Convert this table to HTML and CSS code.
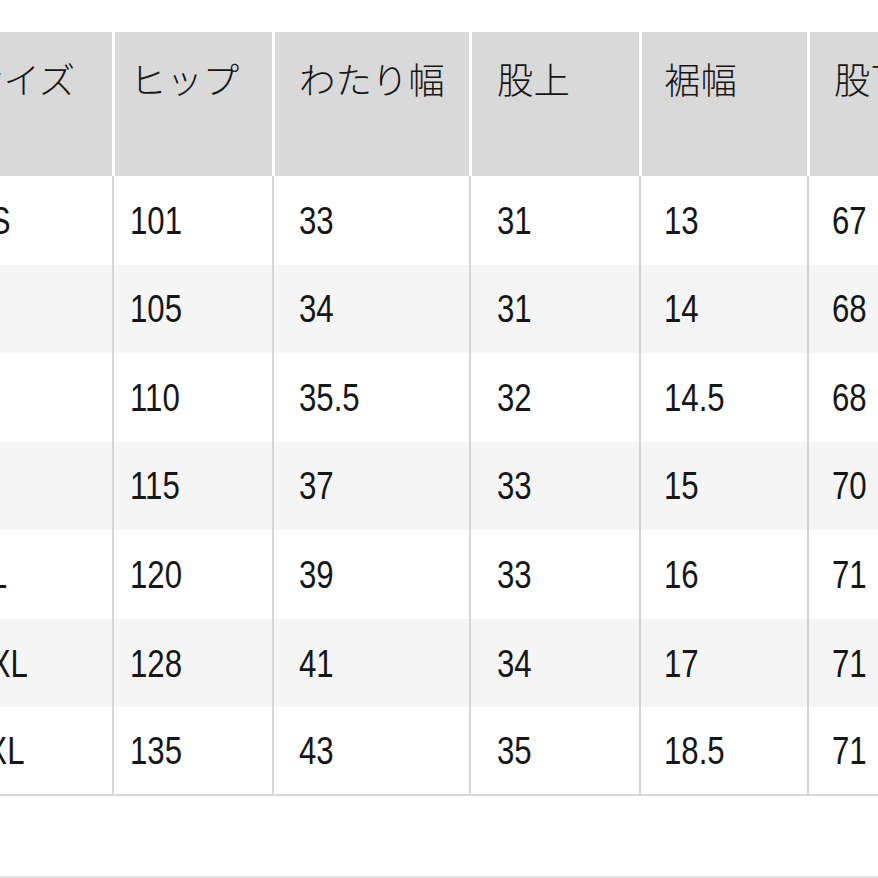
FILE: index.html
```html
<!DOCTYPE html>
<html lang="ja">
<head>
<meta charset="utf-8">
<title>サイズ表</title>
<link rel="stylesheet" href="styles.css">
</head>
<body>
<div class="viewport">
  <div class="scroller">
    <table class="size-table">
      <colgroup>
        <col class="c-size">
        <col class="c-hip">
        <col class="c-thigh">
        <col class="c-rise">
        <col class="c-hem">
        <col class="c-inseam">
      </colgroup>
      <thead>
        <tr>
          <th>サイズ</th>
          <th>ヒップ</th>
          <th>わたり幅</th>
          <th>股上</th>
          <th>裾幅</th>
          <th>股下</th>
        </tr>
      </thead>
      <tbody>
        <tr><td><span class="v">XS</span></td><td><span class="v">101</span></td><td><span class="v">33</span></td><td><span class="v">31</span></td><td><span class="v">13</span></td><td><span class="v">67</span></td></tr>
        <tr><td><span class="v">S</span></td><td><span class="v">105</span></td><td><span class="v">34</span></td><td><span class="v">31</span></td><td><span class="v">14</span></td><td><span class="v">68</span></td></tr>
        <tr><td><span class="v">M</span></td><td><span class="v">110</span></td><td><span class="v">35.5</span></td><td><span class="v">32</span></td><td><span class="v">14.5</span></td><td><span class="v">68</span></td></tr>
        <tr><td><span class="v">L</span></td><td><span class="v">115</span></td><td><span class="v">37</span></td><td><span class="v">33</span></td><td><span class="v">15</span></td><td><span class="v">70</span></td></tr>
        <tr><td><span class="v">XL</span></td><td><span class="v">120</span></td><td><span class="v">39</span></td><td><span class="v">33</span></td><td><span class="v">16</span></td><td><span class="v">71</span></td></tr>
        <tr><td><span class="v">XXL</span></td><td><span class="v">128</span></td><td><span class="v">41</span></td><td><span class="v">34</span></td><td><span class="v">17</span></td><td><span class="v">71</span></td></tr>
        <tr><td><span class="v">3XL</span></td><td><span class="v">135</span></td><td><span class="v">43</span></td><td><span class="v">35</span></td><td><span class="v">18.5</span></td><td><span class="v">71</span></td></tr>
      </tbody>
    </table>
  </div>
  <div class="rule"></div>
</div>
</body>
</html>
```
FILE: styles.css
```css
html, body {
  margin: 0;
  padding: 0;
  background: #ffffff;
}

.viewport {
  width: 878px;
  height: 878px;
  overflow: hidden;
  display: flex;
  flex-direction: column;
  font-family: "Liberation Sans", "Noto Sans CJK JP", sans-serif;
  color: #161616;
}

.scroller {
  overflow: hidden;
  padding-top: 32px;
  flex: 0 0 auto;
}

.size-table {
  margin-left: -60px;
  border-collapse: separate;
  border-spacing: 0;
  table-layout: fixed;
  width: 1067px;
}

.c-size { width: 172px; }
.c-hip { width: 160px; }
.c-thigh { width: 197px; }
.c-rise { width: 170px; }
.c-hem { width: 168px; }
.c-inseam { width: 200px; }

/* header */
.size-table th {
  background: #d9d9d9;
  height: 144px;
  box-sizing: border-box;
  padding: 25px 0 0 21px;
  vertical-align: top;
  text-align: left;
  font-family: "Noto Sans CJK JP", sans-serif;
  font-weight: 300;
  font-size: 36.4px;
  line-height: 1.2;
  border-left: 3px solid #ffffff;
  white-space: nowrap;
  overflow: hidden;
}

.size-table th:nth-child(1) { border-left: 0; padding-left: 27px; }
.size-table th:nth-child(2) { padding-left: 15px; }
.size-table th:nth-child(3) { padding-left: 24px; }
.size-table th:nth-child(4) { padding-left: 25px; }
.size-table th:nth-child(5) { padding-left: 22px; }
.size-table th:nth-child(6) { padding-left: 24px; }

/* body */
.size-table td {
  height: 88.57px;
  box-sizing: border-box;
  padding: 0 0 0 22px;
  vertical-align: middle;
  text-align: left;
  font-size: 39px;
  line-height: 1;
  border-left: 2px solid #d6d6d6;
  white-space: nowrap;
}

.size-table td:nth-child(1) { border-left: 0; padding-left: 29px; }
.size-table td:nth-child(2) { padding-left: 16px; }
.size-table td:nth-child(3) { padding-left: 25px; }
.size-table td:nth-child(4) { padding-left: 26px; }
.size-table td:nth-child(5) { padding-left: 23px; }
.size-table td:nth-child(6) { padding-left: 23px; }

/* narrow figures, like the condensed face of the original */
.v {
  display: inline-block;
  transform: scaleX(0.8);
  transform-origin: 0 50%;
}

.size-table tbody tr:nth-child(even) td {
  background: #f5f5f5;
}

.size-table tbody tr:last-child td {
  border-bottom: 2px solid #d9d9d9;
}

.rule {
  margin-top: auto;
  height: 2px;
  background: #e2e2e2;
}
```
